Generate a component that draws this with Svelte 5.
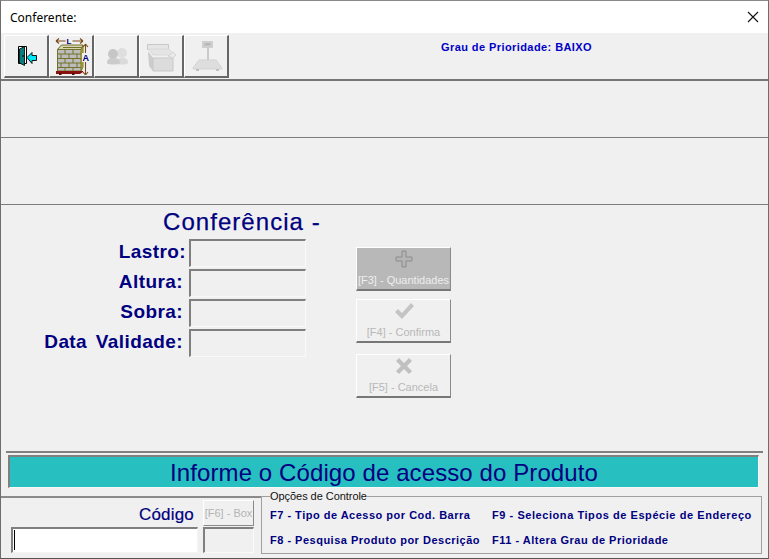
<script>
  const rows = [
    { label: 'Lastro:', first: true },
    { label: 'Altura:', first: false },
    { label: 'Sobra:', first: false },
    { label: 'Data Validade:', first: false }
  ];
  const opts = [
    'F7 - Tipo de Acesso por Cod. Barra',
    'F9 - Seleciona Tipos de Espécie de Endereço',
    'F8 - Pesquisa Produto por Descrição',
    'F11 - Altera Grau de Prioridade'
  ];
</script>

<div class="win">
  <header class="title">
    <span class="title-text">Conferente:</span>
    <svg class="close" width="12" height="12" viewBox="0 0 12 12"><path d="M1 1l10 10M11 1L1 11" stroke="#111" stroke-width="1.1" fill="none"/></svg>
  </header>

  <section class="toolbar">
    <div class="tools">
      <button class="tool">
        <svg width="42" height="39" viewBox="0 0 42 39">
          <path d="M13.500 10.500h8v17h-8z" fill="#fff" stroke="#000"/>
          <path d="M14.500 13l5-2.500v19l-5-2.500z" fill="#0c7c7c" stroke="#000" stroke-width=".8"/>
          <rect x="17.500" y="19" width="1" height="2" fill="#000"/>
          <path d="M22 21.500l5-5v3h4.500v5H27v3z" fill="#00e8f8" stroke="#000" stroke-width=".9"/>
        </svg>
      </button>
      <button class="tool">
        <svg width="42" height="39" viewBox="0 0 42 39">
          <path d="M6 5h27M6 5l3-2.500M6 5l3 2.500M33 5l-3-2.500M33 5l-3 2.500" stroke="#7a4a1a" stroke-width="1.100" fill="none"/>
          <rect x="15.500" y="1" width="7" height="7" fill="#f0f0f0"/>
          <text x="16.500" y="8" class="dim">L</text>
          <path d="M7 13l4-4h22l-2 4z" fill="#d4d4b0"/>
          <path d="M7 13h24v22H7z" fill="#bcbcbc"/>
          <path d="M31 13l2-4v22l-2 4z" fill="#c0bc20"/>
          <g stroke="#72722a" stroke-width="1" fill="none">
            <path d="M7.500 13.500h23.500v21.500H7.500zM7.500 18h23.500M7.500 22.500h23.500M7.500 27h23.500M7.500 31.500h23.500"/>
            <path d="M15 13.500V18M23 13.500V18M11 18v4.500M19 18v4.500M27 18v4.500M15 22.500V27M23 22.500V27M11 27v4.500M19 27v4.500M27 27v4.500M15 31.500V35M23 31.500V35"/>
            <path d="M33 9v22l-2 4"/>
            <path d="M7.500 13.500l4-4.500h21.500l-2 4.500M13 11.500h19"/>
          </g>
          <path d="M6 35h27v1l-3 2H6z" fill="#8a1010"/>
          <rect x="9" y="37" width="2.500" height="2" fill="#5a0808"/><rect x="22" y="37" width="2.500" height="2" fill="#5a0808"/>
          <path d="M35.500 8v31M35.500 8l-2.500 3M35.500 8l2.500 3M35.500 39l-2.500-3M35.500 39l2.500-3" stroke="#7a4a1a" stroke-width="1.100" fill="none"/>
          <rect x="32" y="17" width="7" height="9" fill="#f0f0f0"/>
          <text x="32.500" y="25" class="dim big">A</text>
        </svg>
      </button>
      <button class="tool">
        <svg width="42" height="39" viewBox="0 0 42 39">
          <circle cx="27" cy="17" r="5" fill="#dedede"/>
          <path d="M21 27c0-4 2-5 6-5s6 1 6 5c0 2-12 2-12 0z" fill="#dadada"/>
          <circle cx="18" cy="18" r="5" fill="#c6c6c6"/>
          <path d="M12 27c0-4 2-5 6-5s7 1 7 5c0 2-13 2-13 0z" fill="#cbcbcb"/>
        </svg>
      </button>
      <button class="tool">
        <svg width="42" height="39" viewBox="0 0 42 39">
          <path d="M7.500 8.500h21v5h-21z" fill="#e6e6e6" stroke="#c8c8c8"/>
          <path d="M9 13l4 6h22l-6-6z" fill="#e4e4e4" stroke="#dadada"/>
          <path d="M8 15l5 7v13l-4-5z" fill="#cccccc"/>
          <path d="M13 22h20v13H13z" fill="#dcdcdc" stroke="#c8c8c8"/>
          <path d="M33 22l3-3-3-3-5 4z" fill="#e8e8e8" stroke="#d4d4d4"/>
        </svg>
      </button>
      <button class="tool">
        <svg width="42" height="39" viewBox="0 0 42 39">
          <rect x="17" y="5" width="11" height="7" fill="#cfcfcf"/>
          <rect x="19.500" y="7" width="6" height="2.500" fill="#b8b8b8"/>
          <rect x="22" y="12" width="2" height="12" fill="#cacaca"/>
          <path d="M14 24h17l6 8v1H8v-1z" fill="#dedede" stroke="#d2d2d2"/>
          <rect x="11" y="33" width="3" height="2" fill="#c0c0c0"/><rect x="31" y="33" width="3" height="2" fill="#c0c0c0"/>
        </svg>
      </button>
    </div>
    <div class="priority">Grau de Prioridade: BAIXO</div>
  </section>

  <section class="panel p1"></section>
  <section class="panel p2"></section>

  <main class="form">
    <div class="fields">
      <h1>Conferência -</h1>
      {#each rows as r}
        <div class="row">
          <span class="label" class:wide={r.first}>{r.label}</span>
          <span class="sunken" class:first={r.first}></span>
        </div>
      {/each}
    </div>
    <div class="actions">
      <button class="act hot">
        <svg width="18" height="18" viewBox="0 0 18 18"><path d="M7 1h4v6h6v4h-6v6H7v-6H1V7h6z" fill="#b4b4b4" stroke="#8c8c8c"/></svg>
        <span>[F3] - Quantidades</span>
      </button>
      <button class="act a2">
        <svg width="20" height="18" viewBox="0 0 20 18"><path d="M1 10l3-3 4 4L17 1l3 3L8 17z" fill="#c4c4c4"/></svg>
        <span>[F4] - Confirma</span>
      </button>
      <button class="act a3">
        <svg width="18" height="18" viewBox="0 0 18 18"><path d="M1 4l3-3 5 5 5-5 3 3-5 5 5 5-3 3-5-5-5 5-3-3 5-5z" fill="#c0c0c0"/></svg>
        <span>[F5] - Cancela</span>
      </button>
    </div>
  </main>

  <div class="status-wrap">
    <div class="status">Informe o Código de acesso do Produto</div>
  </div>

  <footer class="bottom">
    <div class="code">
      <div class="code-left">
        <span class="code-label">Código</span>
        <div class="input"><i class="caret"></i></div>
      </div>
      <div class="code-right">
        <button class="box">[F6] - Box</button>
        <span class="sunken small"></span>
      </div>
    </div>
    <fieldset class="group">
      <legend>Opções de Controle</legend>
      <div class="opts">
        {#each opts as o}<span>{o}</span>{/each}
      </div>
    </fieldset>
  </footer>
</div>

<style>
  :global(body) { margin: 0; background: #f0f0f0; }
  .win {
    width: 769px; height: 559px; box-sizing: border-box; overflow: hidden;
    display: flex; flex-direction: column; background: #f0f0f0;
    border-left: 1px solid #6d6d6d; border-right: 1px solid #6d6d6d; border-bottom: 1px solid #555;
    border-top: 1px solid #8a8a8a;
    font-family: "Liberation Sans", Arial, sans-serif;
  }
  button { font-family: inherit; margin: 0; padding: 0; }
  .title {
    height: 32px; flex: none; background: #fff; display: flex; align-items: center; justify-content: space-between;
    padding: 0 9px 0 9px;
  }
  .title-text { font-family: "Noto Sans", "Open Sans", sans-serif; font-size: 12px; color: #000; }
  .toolbar {
    height: 48px; flex: none; box-sizing: border-box; display: flex; align-items: flex-start;
    border-bottom: 2px solid #767676; padding: 2px 0 0 3px;
  }
  .tools { display: flex; }
  .tool {
    width: 45px; height: 43px; box-sizing: border-box; background: #f0f0f0;
    border: none; border-top: 1px solid #fff; border-left: 1px solid #fff;
    border-right: 2px solid #666; border-bottom: 2px solid #666;
    display: flex; align-items: flex-start; justify-content: flex-start;
  }
  .tool svg { display: block; flex: none; }
  .dim { font: bold 8px "Liberation Sans", sans-serif; fill: #000080; }
  .big { font-size: 9px; }
  .priority {
    margin: 6px 0 0 212px; font-size: 11px; font-weight: bold; color: #0000c8; letter-spacing: .42px; white-space: nowrap;
  }
  .panel { flex: none; box-sizing: border-box; border-bottom: 1px solid #7c7c7c; }
  .p1 { height: 57px; }
  .p2 { height: 67px; }
  .form { height: 248px; flex: none; box-sizing: border-box; display: flex; border-bottom: 2px solid #808080; margin: 0 5px; }
  .fields { width: 355px; margin-left: -5px; padding-top: 2px; box-sizing: border-box; flex: none; }
  h1 {
    margin: 0 0 2px 162px; font-size: 24px; line-height: 29px; font-weight: normal; color: #000080; letter-spacing: 1.05px;
    white-space: nowrap; -webkit-text-stroke: .25px #000080;
  }
  .row { display: flex; height: 30px; align-items: center; }
  .label {
    display: block; box-sizing: border-box; width: 182px; text-align: right; font-size: 19px; line-height: 26px; padding-bottom: 2px; font-weight: bold; color: #000080;
    letter-spacing: .42px; word-spacing: 3px; white-space: nowrap; flex: none;
  }
  .label.wide { width: 185px; }
  .sunken {
    display: block; box-sizing: border-box; width: 117px; height: 28px; margin-left: 6px; flex: none;
    border: 1px solid #f9f9f9; border-top: 2px solid #7f7f7f; border-left: 2px solid #7f7f7f; background: #f0f0f0;
  }
  .row .first { margin-left: 3px; }
  .actions { display: flex; flex-direction: column; padding: 42px 0 0 0; }
  .act {
    width: 95px; height: 44px; box-sizing: border-box; display: flex; flex-direction: column; align-items: center; justify-content: flex-start;
    background: #f0f0f0; border: none; border-top: 1px solid #fff; border-left: 1px solid #fff;
    border-right: 1px solid #8a8a8a; border-bottom: 2px solid #777; color: #b8b8b8;
    font-size: 11px; padding-top: 2px; overflow: hidden;
  }
  .act span { line-height: 14px; margin-top: 5px; white-space: nowrap; }
  .act svg { flex: none; }
  .hot { background: #b8b8b8; color: #eeeeee; }
  .a2 { margin-top: 8px; }
  .a3 { margin-top: 11px; }
  .status-wrap { flex: 1; padding: 2px 9px 0 7px; min-height: 0; }
  .status {
    height: 33px; box-sizing: border-box; background: #27bfbf; color: #000080; text-align: center;
    font-size: 24px; line-height: 31px; letter-spacing: .1px; border: 1px solid #f8f8f8; border-top: 2px solid #7f7f7f; border-left: 2px solid #7f7f7f;
  }
  .bottom { height: 62px; flex: none; display: flex; }
  .code {
    display: flex; width: 260px; padding-left: 10px; flex: none; box-sizing: border-box; border-top: 2px solid #8a8a8a;
  }
  .code-left { width: 188px; display: flex; flex-direction: column; align-items: flex-end; padding-top: 5px; flex: none; box-sizing: border-box; }
  .code-label { font-size: 17px; line-height: 24px; height: 24px; color: #000080; margin-right: 5px; letter-spacing: .2px; -webkit-text-stroke: .2px #000080; }
  .input {
    width: 187px; height: 26px; box-sizing: border-box; background: #fff; margin-right: 1px;
    border: 1px solid #f4f4f4; border-top: 2px solid #7f7f7f; border-left: 2px solid #7f7f7f; padding: 1px 0 0 1px;
  }
  .caret { display: block; width: 1px; height: 20px; background: #000; }
  .code-right { margin-left: 4px; padding-top: 2px; width: 51px; }
  .box {
    display: block; width: 51px; height: 26px; box-sizing: border-box; background: #f0f0f0; color: #b4b4b4; font-size: 11px;
    border: none; border-top: 1px solid #fff; border-left: 1px solid #fff; border-right: 1px solid #8a8a8a; border-bottom: 1px solid #8a8a8a; white-space: nowrap;
    overflow: hidden;
  }
  .small { width: 51px; height: 26px; margin: 1px 0 0 0; }
  .group {
    margin: -6px 0 0 0; padding: 0 0 0 8px; width: 501px; height: 64px; box-sizing: border-box; border: 1px solid #a0a0a0; min-width: 0; flex: none;
  }
  legend { padding: 0; font-size: 11px; line-height: 13px; color: #111; letter-spacing: -.05px; }
  .opts {
    display: grid; grid-template-columns: 222px 1fr; row-gap: 10px; font-size: 11px; font-weight: bold; color: #000080; letter-spacing: .5px; white-space: nowrap;
    line-height: 15px; padding-top: 5px;
  }
  .opts span:nth-child(2) { letter-spacing: .56px; }
</style>
